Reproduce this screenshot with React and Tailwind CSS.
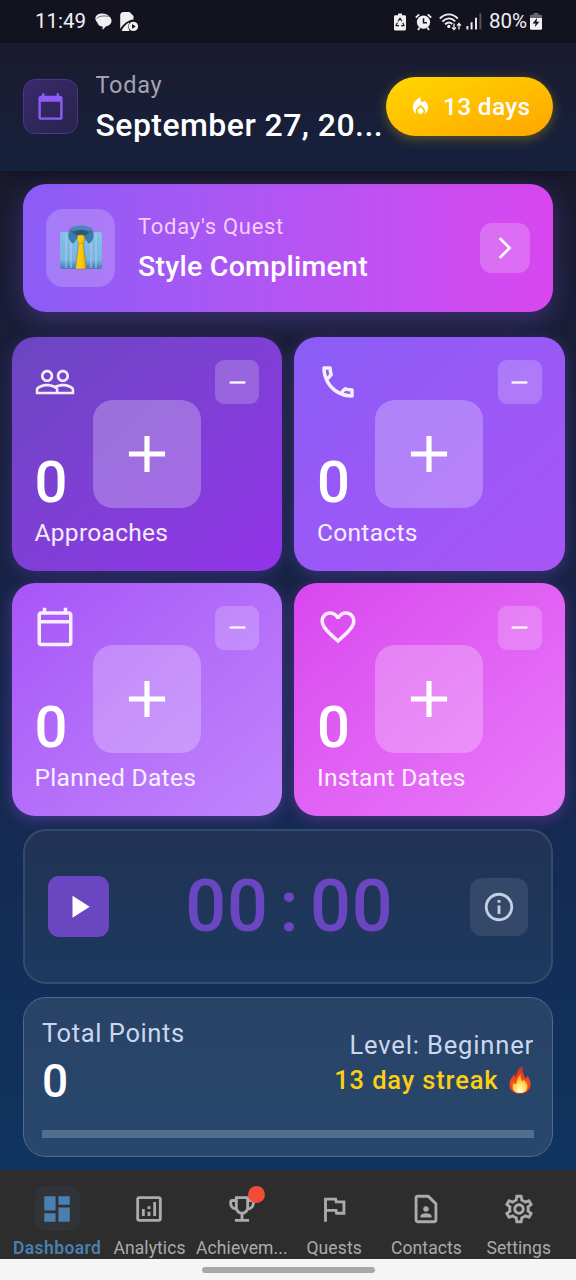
import React from 'react';
import {
  MdPeopleOutline, MdOutlineCalendarToday, MdCalendarToday, MdOutlineCall, MdFavoriteBorder,
  MdRemove, MdAdd, MdPlayArrow, MdInfoOutline, MdDashboard, MdOutlineAnalytics,
  MdOutlineEmojiEvents, MdOutlineFlag, MdOutlineContactPage, MdOutlineSettings,
  MdLocalFireDepartment, MdArrowForwardIos,
} from 'react-icons/md';

function StatusBar() {
  return (
    <div className="flex h-[43px] shrink-0 items-center bg-[#13131f] pl-[35px] pr-[34px] text-[20px] text-[#f0f0f2]">
      <span className="w-[52px] text-[20.5px] leading-none whitespace-nowrap">11:49</span>
      <svg className="ml-[8px] h-[18px] w-[17px]" viewBox="0 0 17 18" fill="#f0f0f2">
        <path d="M7 0.5C3 0.5 0.3 2.8 0.4 5.4C0.4 7 1.3 8.3 2.2 9.2C2.8 12 5 13.4 7.6 13.6V17L10.8 13.4C14 12.8 16.5 10.8 16.5 8C16.5 5.6 15.4 4.4 14.4 3.8C13 1.6 10 0.5 7 0.5Z" />
        <path d="M1.8 5.6C3.2 3.2 8 2.4 13.4 3.4" fill="none" stroke="#13131f" strokeWidth="0.6" />
      </svg>
      <svg className="ml-[8px] h-[20px] w-[19px]" viewBox="0 0 19 20" fill="#f0f0f2">
        <path d="M3.5 0H9.5L13.5 4V7.6C8 8.2 3 12 0.2 17V3.4C0.2 1.4 1.4 0 3.5 0Z" />
        <path d="M1.6 18.8C3.3 15 6.2 12 9.4 10.3C8 13 8 16.6 9.6 19H3C2.4 19 2 19 1.6 18.8Z" />
        <circle cx="13.4" cy="14.4" r="4.7" />
        <path d="M12 12.1V16.7L15.8 14.4Z" fill="#13131f" />
      </svg>
      <svg className="ml-auto h-[18px] w-[12px]" viewBox="0 0 12 18">
        <path d="M4 0.4H8V2.2H10.6Q12 2.2 12 3.6V16.2Q12 17.6 10.6 17.6H1.4Q0 17.6 0 16.2V3.6Q0 2.2 1.4 2.2H4Z" fill="#f0f0f2" />
        <path d="M4.1 8.1L6 5.2L7.9 8.1M8.8 9.7L10 12.6H7.2M5 12.6H2L3.4 9.5" fill="none" stroke="#13131f" strokeWidth="1.1" />
      </svg>
      <svg className="ml-[9px] h-[18px] w-[17px]" viewBox="0 0 17 18">
        <circle cx="8.5" cy="9.2" r="6.6" fill="#f0f0f2" />
        <path d="M0.8 4.6L4.2 1.3M16.2 4.6L12.8 1.3M3 17L4.7 14.6M14 17L12.3 14.6" stroke="#f0f0f2" strokeWidth="1.8" />
        <path d="M8.5 5.2V9.8H12" fill="none" stroke="#13131f" strokeWidth="1.5" />
      </svg>
      <svg className="ml-[7px] h-[18px] w-[23px]" viewBox="0 0 23 18" fill="none" stroke="#f0f0f2">
        <path d="M0.8 5.6C6 0 13.6 0 18.8 5.6M3.4 8.6C7.4 4.4 12.4 4.4 16.2 8.4M6 11.4C8.4 9 11.2 9 13.4 11" strokeWidth="1.9" />
        <circle cx="9.8" cy="13.4" r="1.6" fill="#f0f0f2" stroke="none" />
        <path d="M15 10.4V16.4M13 14.4L15 16.6L17 14.4M20 16.6V10.6M18 12.6L20 10.4L22 12.6" strokeWidth="1.3" />
      </svg>
      <svg className="ml-[4px] h-[17px] w-[16px]" viewBox="0 0 16 17">
        <path d="M1.4 13V16.4M5.6 9.2V16.4M10 4.8V16.4" stroke="#f0f0f2" strokeWidth="1.9" />
        <path d="M14.4 0.4V16.4" stroke="#55555f" strokeWidth="1.9" />
      </svg>
      <span className="ml-[7px] w-[38px] text-[20.5px] leading-none whitespace-nowrap">80%</span>
      <svg className="ml-[3px] h-[17px] w-[12px]" viewBox="0 0 12 17">
        <path d="M3.8 0H8.2V1.8H10.8Q12 1.8 12 3.2V5H0V3.2Q0 1.8 1.2 1.8H3.8Z" fill="#68686f" />
        <path d="M0 5H12V15.4Q12 16.8 10.8 16.8H1.2Q0 16.8 0 15.4Z" fill="#f0f0f2" />
        <path d="M7.2 4.8L2.6 10.4H5.6L4.8 14.2L9.4 8.8H6.5Z" fill="#13131f" />
      </svg>
    </div>
  );
}

function Header() {
  return (
    <header className="z-10 flex h-[128px] shrink-0 items-center bg-linear-to-b from-[#1a1a2e] to-[#16213e] px-[23px] pb-px shadow-[0_3px_14px_rgba(0,0,0,0.3)]">
      <div className="flex size-[55px] shrink-0 items-center justify-center rounded-[12px] border border-[#4a3886] bg-linear-to-br from-[#3a2a6c] to-[#28234c]">
        <MdCalendarToday className="size-[29px] text-[#8b5cf6]" />
      </div>
      <div className="ml-[17.5px] flex w-[291.5px] shrink-0 flex-col pt-[2px]">
        <span className="text-[23.5px] leading-[30px] tracking-[0.72px] text-[#a3a3b0]">Today</span>
        <span className="mt-[5px] text-[32px] leading-[40px] font-[480] tracking-[0.45px] whitespace-nowrap text-white">September 27, 20...</span>
      </div>
      <div className="-ml-px flex h-[59px] w-[167px] shrink-0 items-center rounded-full bg-linear-to-br from-[#ffd700] to-[#ffa500] pl-[23px] shadow-[0_3px_12px_rgba(255,215,0,0.3)]">
        <MdLocalFireDepartment className="size-[23px] text-white" />
        <span className="ml-[11px] pt-px text-[24.5px] font-[480] tracking-[0.3px] whitespace-nowrap text-white">13 days</span>
      </div>
    </header>
  );
}

function ShirtEmoji() {
  return (
    <svg className="h-[46px] w-[44px]" viewBox="0 0 44 46">
      <defs>
        <linearGradient id="cloth" x1="0" y1="0" x2="0" y2="1">
          <stop offset="0" stopColor="#86bfe8" />
          <stop offset="0.75" stopColor="#7ab3de" />
          <stop offset="1" stopColor="#4478b2" />
        </linearGradient>
        <linearGradient id="tie" x1="0" y1="0" x2="1" y2="0">
          <stop offset="0" stopColor="#ffd60a" />
          <stop offset="0.6" stopColor="#fcc40a" />
          <stop offset="1" stopColor="#e59d06" />
        </linearGradient>
      </defs>
      <path d="M1 9Q1 7 4 7H40Q43 7 43 9V42Q43 44 41 44H3Q1 44 1 42Z" fill="url(#cloth)" />
      <path d="M7 9V43M12 14V43M32 14V43M37 9V43" stroke="#b0d8f4" strokeWidth="1.6" opacity="0.5" />
      <ellipse cx="22" cy="6.5" rx="10.5" ry="5" fill="#31577d" />
      <path d="M10.500 4Q14 0.500 22 0.500Q30 0.500 33.500 4L30 6.500Q22 3 14 6.500Z" fill="#4b87b9" />
      <path d="M11 4Q8.500 9 10 14Q12 18 14.500 18.500L19.500 11.500Q14 9 11 4Z" fill="#3c79ad" />
      <path d="M33 4Q35.500 9 34 14Q32 18 29.500 18.500L24.500 11.500Q30 9 33 4Z" fill="#3c79ad" />
      <path d="M18.500 10.500Q22 9 25.500 10.500L26 15L24.200 18.500L27.500 44H16.500L19.800 18.500L18 15Z" fill="url(#tie)" stroke="#2d669c" strokeWidth="0.4" />
      <path d="M19.500 18.300H24.500" stroke="#d89506" strokeWidth="0.8" />
    </svg>
  );
}

function FireEmoji() {
  return (
    <svg className="h-[28px] w-[24px]" viewBox="0 0 24 28">
      <defs>
        <linearGradient id="flame" x1="0" y1="0" x2="0" y2="1">
          <stop offset="0" stopColor="#d92a1c" />
          <stop offset="0.6" stopColor="#f4511e" />
          <stop offset="1" stopColor="#e53118" />
        </linearGradient>
        <radialGradient id="core" cx="0.5" cy="0.85" r="0.75">
          <stop offset="0" stopColor="#fffce8" />
          <stop offset="0.45" stopColor="#ffe15a" />
          <stop offset="1" stopColor="#ff9d1e" />
        </radialGradient>
      </defs>
      <path d="M15 0.500C9.500 2 8 7 8.400 11C7.600 10.600 6.600 9.500 6.200 8C3 12 1.500 15.500 1.500 19C1.500 24.500 6 27.800 12 27.800C18 27.800 22.500 24 22.500 18.500C22.500 14.500 21 12 19.400 9.500C19 11 18.400 12 17.600 12.400C16 9 13.600 5 15 0.500Z" fill="url(#flame)" />
      <path d="M12.800 8C12.200 11 13.500 13.500 14.200 15.500C14.800 15.300 15.300 14.500 15.600 13.500C18 16 20 18.500 19.500 21.500C19 25.500 16 27 12 27C8 27 4.600 25 4.500 21C4.500 19 5.200 17.600 6 16.500C6.500 17.500 7.200 18.200 8 18.200C9.500 15 9 11 12.800 8Z" fill="url(#core)" />
    </svg>
  );
}

function QuestCard() {
  return (
    <section className="mx-[23px] mt-[12.5px] flex h-[128px] shrink-0 items-center rounded-[23px] bg-linear-to-r from-[#8b5cf6] to-[#d946ef] px-[23px] shadow-[0_8px_24px_rgba(139,92,246,0.3)]">
      <div className="flex h-[78px] w-[69px] items-center justify-center rounded-[17px] bg-white/20">
        <ShirtEmoji />
      </div>
      <div className="ml-[23px] flex flex-col pt-[2px]">
        <span className="text-[22px] leading-[28px] tracking-[0.72px] whitespace-nowrap text-[#f5cdfa]">Today's Quest</span>
        <span className="mt-[8px] text-[28.5px] leading-[36px] font-[480] tracking-[0.25px] whitespace-nowrap text-white">Style Compliment</span>
      </div>
      <div className="ml-auto flex size-[50px] items-center justify-center rounded-[12px] bg-white/20">
        <MdArrowForwardIos className="size-[26px] text-white" />
      </div>
    </section>
  );
}

function CounterCard({ icon: Icon, label, tone }) {
  return (
    <div className={`grid h-[233.5px] rounded-[23px] ${tone}`}>
      <div className="col-start-1 row-start-1 flex flex-col justify-between px-[23px] pt-[23px] pb-[22px]">
        <div className="flex items-start justify-between">
          <Icon className="-ml-[0.500px] mt-[0.500px] size-[42px] text-white/90" />
          <button className="flex size-[44px] items-center justify-center rounded-[9px] bg-white/20">
            <MdRemove className="size-[27px] text-white" />
          </button>
        </div>
        <div className="flex flex-col">
          <span className="text-[58px] leading-[62px] font-[480] text-white">0</span>
          <span className="mt-[4px] text-[24.500px] leading-[32px] tracking-[0.3px] whitespace-nowrap text-white/90">{label}</span>
        </div>
      </div>
      <button className="col-start-1 row-start-1 flex size-[108px] items-center justify-center place-self-center rounded-[20px] bg-white/25">
        <MdAdd className="size-[62px] text-white" />
      </button>
    </div>
  );
}

const counters = [
  { icon: MdPeopleOutline, label: 'Approaches', tone: 'bg-linear-to-br from-[#6b46c1] to-[#9333ea] shadow-[0_3px_14px_rgba(107,70,193,0.35)]' },
  { icon: MdOutlineCall, label: 'Contacts', tone: 'bg-linear-to-br from-[#8b5cf6] to-[#a855f7] shadow-[0_3px_14px_rgba(139,92,246,0.3)]' },
  { icon: MdOutlineCalendarToday, label: 'Planned Dates', tone: 'bg-linear-to-br from-[#a855f7] to-[#c084fc] shadow-[0_3px_14px_rgba(168,85,247,0.35)]' },
  { icon: MdFavoriteBorder, label: 'Instant Dates', tone: 'bg-linear-to-br from-[#d946ef] to-[#e879f9] shadow-[0_3px_14px_rgba(217,70,239,0.3)]' },
];

function Timer() {
  return (
    <section className="mx-[23px] mt-[13px] flex h-[155px] shrink-0 items-center justify-between rounded-[23px] border-2 border-[#334b6e] bg-linear-to-b from-[#213354] to-[#1c395f] px-[23px]">
      <button className="flex size-[61px] items-center justify-center rounded-[11px] bg-[#6b46c1]">
        <MdPlayArrow className="size-[37.500px] text-white" />
      </button>
      <div className="flex w-[209px] text-[72px] leading-none font-medium text-[#6b46c1]">
        {'00:00'.split('').map((c, i) => (
          <span key={i} className="flex w-[41.600px] justify-center">{c}</span>
        ))}
      </div>
      <button className="flex h-[58px] w-[58px] items-center justify-center rounded-[12px] bg-[#34496a]">
        <MdInfoOutline className="size-[34px] text-[#c3cfe2]" />
      </button>
    </section>
  );
}

function Points() {
  return (
    <section className="mx-[23px] mt-[13px] flex h-[160px] shrink-0 flex-col rounded-[23px] border border-[#4f6a8c] bg-linear-to-b from-[#294366] to-[#28476d] px-[18px] pt-[18px]">
      <div className="flex h-[96px] items-center justify-between">
        <div className="flex h-full flex-col">
          <span className="text-[25.500px] leading-[34px] tracking-[0.6px] text-[#cbd7ef]">Total Points</span>
          <span className="mt-[6px] text-[46px] leading-[50px] font-medium text-white">0</span>
        </div>
        <div className="-mt-[4px] flex flex-col items-end">
          <span className="text-[25.500px] leading-[34px] tracking-[0.850px] whitespace-nowrap text-[#cbd7ef]">Level: Beginner</span>
          <span className="mt-[1px] flex items-center text-[25.500px] leading-[34px] font-[480] tracking-[0.850px] whitespace-nowrap text-[#facf14]">
            13 day streak
            <span className="ml-[9.500px] mr-[2px]"><FireEmoji /></span>
          </span>
        </div>
      </div>
      <div className="mt-[18px] h-[8px] bg-[#526e8e]" />
    </section>
  );
}

const tabs = [
  { icon: MdDashboard, label: 'Dashboard', active: true },
  { icon: MdOutlineAnalytics, label: 'Analytics' },
  { icon: MdOutlineEmojiEvents, label: 'Achievem...', badge: true },
  { icon: MdOutlineFlag, label: 'Quests' },
  { icon: MdOutlineContactPage, label: 'Contacts' },
  { icon: MdOutlineSettings, label: 'Settings' },
];

function TabBar() {
  return (
    <nav className="mt-auto grid h-[89px] shrink-0 grid-cols-6 overflow-hidden bg-[#2d2d2d] px-[11px] pt-[16px]">
      {tabs.map(({ icon: Icon, label, active, badge }) => (
        <div key={label} className="flex flex-col items-center">
          <div className={`relative flex size-[45px] shrink-0 items-center justify-center rounded-[12px] ${active ? 'bg-[#303438] text-[#4a7fb0]' : 'text-[#ababab]'}`}>
            <Icon className="size-[34px]" />
            {badge && <span className="absolute top-0 -right-[1px] size-[17px] rounded-full bg-[#f44b37]" />}
          </div>
          <span className={`mt-[5px] text-[17.5px] leading-[24px] whitespace-nowrap ${active ? 'font-semibold tracking-[0.4px] text-[#4a7fb0]' : 'tracking-[0.1px] text-[#ababab]'}`}>{label}</span>
        </div>
      ))}
    </nav>
  );
}

export default function App() {
  return (
    <div className="flex h-[1280px] w-[576px] flex-col overflow-hidden bg-[#13131f] font-['Roboto',sans-serif]">
      <StatusBar />
      <Header />
      <main className="flex min-h-0 flex-1 flex-col bg-linear-to-b from-[#1a1a2e] via-[#16264c] to-[#0f3460]">
        <QuestCard />
        <div className="mx-[11.500px] mt-[25.500px] grid shrink-0 grid-cols-2 gap-x-[12px] gap-y-[12px]">
          {counters.map((c) => <CounterCard key={c.label} {...c} />)}
        </div>
        <Timer />
        <Points />
      </main>
      <TabBar />
      <footer className="flex h-[21px] shrink-0 items-center justify-center bg-[#f5f5f5]">
        <span className="h-[6px] w-[173px] rounded-full bg-[#a8a8a8]" />
      </footer>
    </div>
  );
}
